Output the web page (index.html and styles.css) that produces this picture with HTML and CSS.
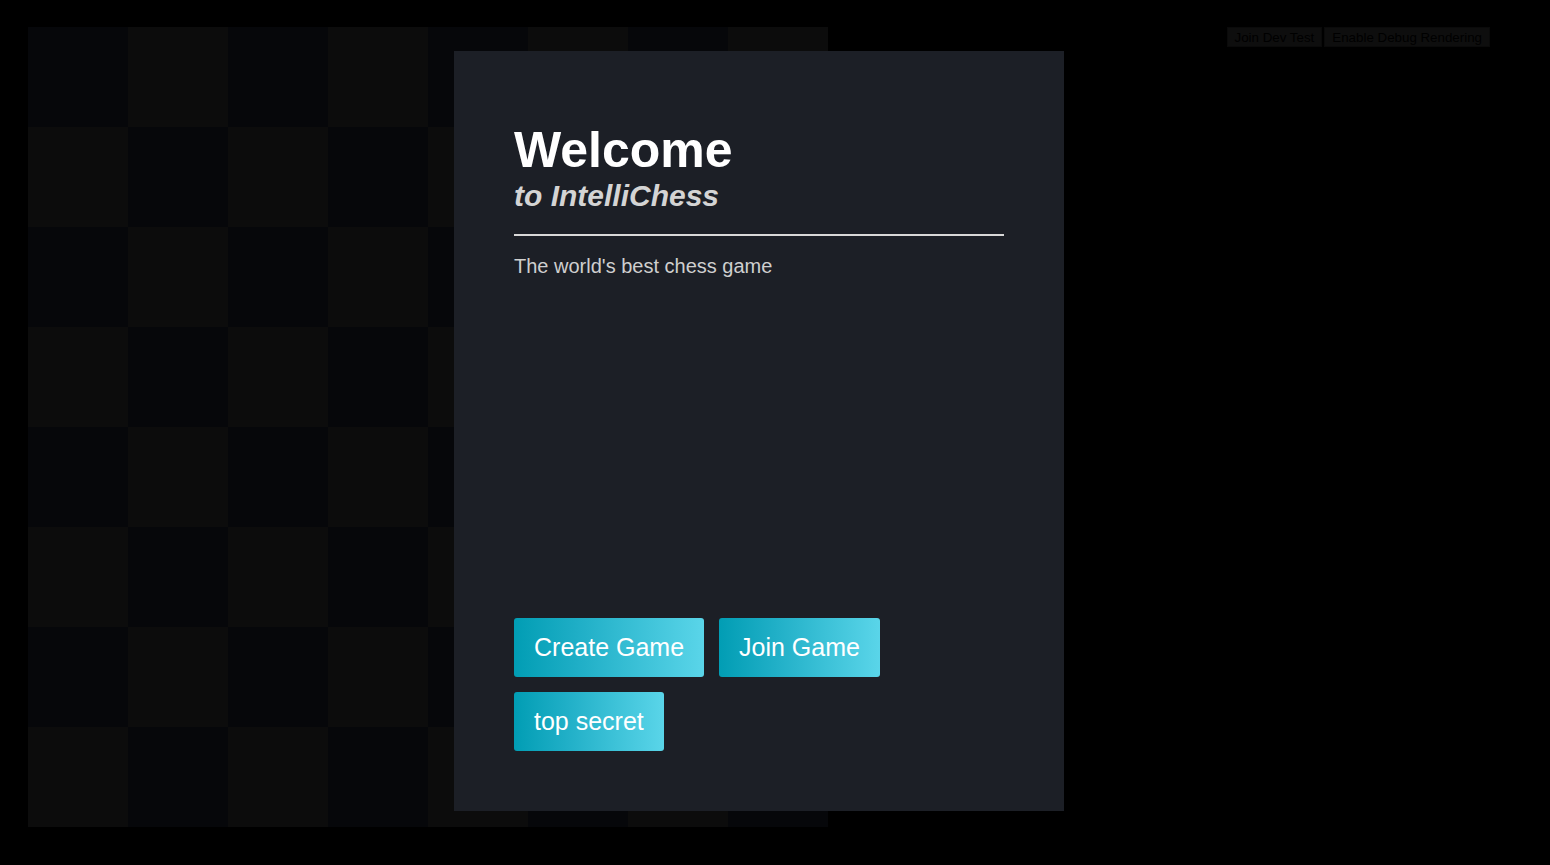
FILE: index.html
```html
<!DOCTYPE html>
<html lang="en">
<head>
<meta charset="utf-8">
<title>IntelliChess</title>
<link rel="stylesheet" href="styles.css">
</head>
<body>
<div class="page">
  <div class="board"></div>

  <section class="welcome">
    <header class="welcome-head">
      <h1 class="title">Welcome</h1>
      <h2 class="subtitle">to IntelliChess</h2>
    </header>
    <hr class="rule">
    <p class="tagline">The world's best chess game</p>
    <div class="actions">
      <button class="btn">Create Game</button>
      <button class="btn">Join Game</button>
      <button class="btn">top secret</button>
    </div>
  </section>

  <div class="debug">
    <button class="debug-btn">Join Dev Test</button>
    <button class="debug-btn">Enable Debug Rendering</button>
  </div>
</div>
</body>
</html>
```

FILE: styles.css
```css
html, body {
  margin: 0;
  padding: 0;
  background: #000;
  height: 100%;
}

.page {
  position: relative;
  width: 1550px;
  height: 865px;
  padding: 27px 28px;
  box-sizing: border-box;
  font-family: "Liberation Sans", Arial, sans-serif;
}

.board {
  width: 800px;
  height: 800px;
  background: repeating-conic-gradient(#0c0c0c 0 25%, #06070a 0 50%) 0 0 / 200px 200px;
}

.welcome {
  position: absolute;
  left: 454px;
  top: 51px;
  width: 610px;
  height: 760px;
  box-sizing: border-box;
  padding: 71px 60px 60px;
  background: #1c1f26;
  display: flex;
  flex-direction: column;
}

.title {
  margin: 0;
  font-size: 50px;
  font-weight: bold;
  line-height: 57px;
  color: #fff;
}

.subtitle {
  margin: 0;
  font-size: 30px;
  font-weight: bold;
  font-style: italic;
  line-height: 34px;
  color: #d4d4d4;
}

.rule {
  margin: 21px 0 0;
  border: 0;
  height: 2px;
  background: #d8d8d8;
}

.tagline {
  margin: 19px 0 0;
  font-size: 20px;
  line-height: 23px;
  color: #cfcfcf;
}

.actions {
  margin-top: auto;
  display: flex;
  flex-wrap: wrap;
  gap: 15px;
}

.btn {
  font-family: "Liberation Sans", Arial, sans-serif;
  font-size: 25px;
  line-height: 29px;
  padding: 15px 20px;
  border: 0;
  border-radius: 3px;
  color: #fff;
  background: linear-gradient(to right, #019db4 0%, #20afc7 35%, #5ad5e9 100%);
  cursor: pointer;
}

.debug {
  position: absolute;
  top: 27px;
  right: 60px;
  display: flex;
  gap: 2px;
}

.debug-btn {
  font-family: "Liberation Sans", Arial, sans-serif;
  font-size: 13.333px;
  height: 20px;
  padding: 1px 7px;
  border: 1px solid #0a0a0a;
  background: #0e0e0e;
  color: #000;
}
```
